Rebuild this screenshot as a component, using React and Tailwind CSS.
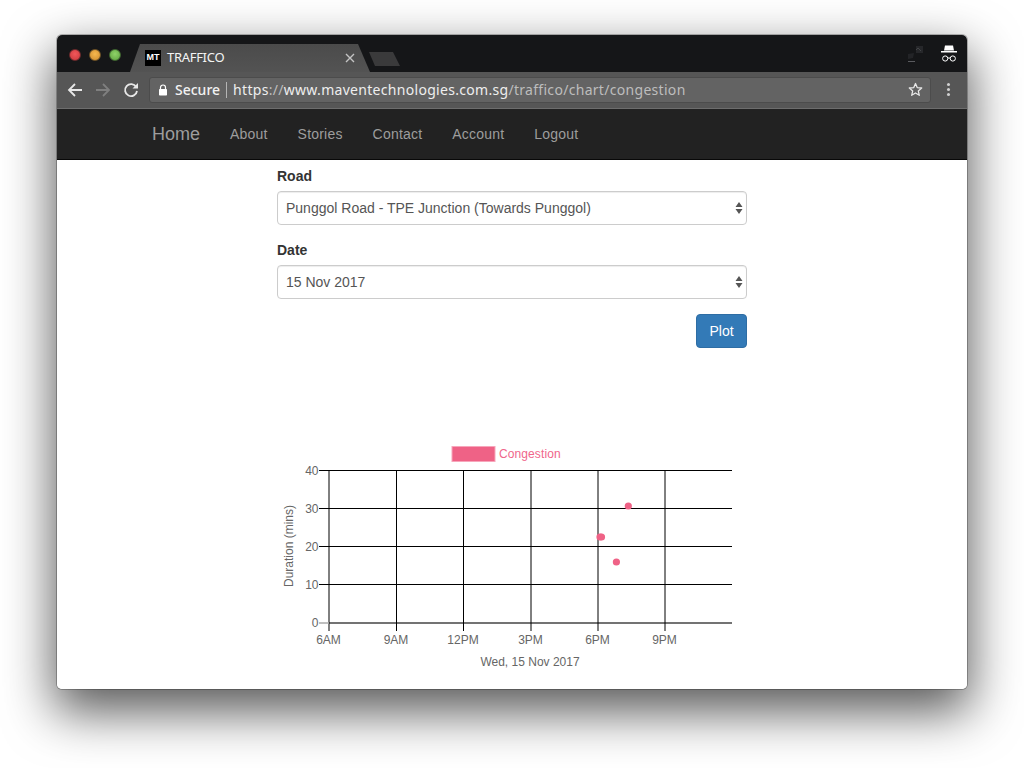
import React from "react";

const FONT_UI = "font-['Noto_Sans',sans-serif]";
const FONT_PAGE = "font-['Liberation_Sans',Arial,sans-serif]";

const navLinks = ["About", "Stories", "Contact", "Account", "Logout"];

function SelectField({ label, value }) {
  return (
    <div className="mb-[15px]">
      <label className="block mb-[5px] text-[14px] leading-[20px] font-bold text-[#333]">{label}</label>
      <div className="relative">
        <select
          defaultValue={value}
          className="block w-full h-[34px] pl-[8px] pr-[24px] appearance-none bg-white border border-[#ccc] rounded-[4px] text-[14px] text-[#555] shadow-[inset_0_1px_1px_rgba(0,0,0,0.075)]"
        >
          <option>{value}</option>
        </select>
        <svg className="absolute right-[4px] top-[10px] pointer-events-none" width="8" height="14" viewBox="0 0 8 14">
          <path d="M4 1 L7.5 6 H0.5 Z M4 13 L7.5 8 H0.5 Z" fill="#555" />
        </svg>
      </div>
    </div>
  );
}

function CongestionChart() {
  const xs = [329, 396.5, 463.5, 531, 598, 665];
  const ys = [470.5, 508.5, 546.5, 584.5];
  const xLabels = ["6AM", "9AM", "12PM", "3PM", "6PM", "9PM"];
  const yLabels = ["40", "30", "20", "10"];
  return (
    <svg width="470" height="240" viewBox="277 440 470 240" className="block" fontFamily="Liberation Sans, Arial, sans-serif">
      <rect x="452" y="446.5" width="43" height="15" fill="#ef6286" stroke="#f7a6bb" strokeWidth="1" />
      <text x="499" y="458" fontSize="12" letterSpacing="0.1" fill="#f0668b">Congestion</text>

      {xs.map((x, i) => (
        <g key={x}>
          <line x1={x} x2={x} y1="470" y2="631" stroke="#000" strokeWidth="1" />
          <text x={x - 0.5} y="644" fontSize="12" fill="#666" textAnchor="middle">{xLabels[i]}</text>
        </g>
      ))}
      {ys.map((y, i) => (
        <g key={y}>
          <line x1="319" x2="732" y1={y} y2={y} stroke="#000" strokeWidth="1" />
          <text x="318.5" y={y + 4} fontSize="12" fill="#666" textAnchor="end">{yLabels[i]}</text>
        </g>
      ))}
      <line x1="319" x2="329" y1="623" y2="623" stroke="#aaa" strokeWidth="1.5" />
      <line x1="329" x2="732" y1="623" y2="623" stroke="#000" strokeOpacity="0.55" strokeWidth="2" />
      <text x="318.5" y="627" fontSize="12" fill="#666" textAnchor="end">0</text>

      <text transform="translate(292.5 546) rotate(-90)" fontSize="12" fill="#666" textAnchor="middle">Duration (mins)</text>
      <text x="530" y="666" fontSize="12" fill="#666" textAnchor="middle">Wed, 15 Nov 2017</text>

      <circle cx="628.3" cy="506" r="3.6" fill="#ef6286" />
      <circle cx="600" cy="537" r="3.6" fill="#ef6286" />
      <circle cx="601.5" cy="537" r="3.6" fill="#ef6286" />
      <circle cx="616.4" cy="562" r="3.6" fill="#ef6286" />
    </svg>
  );
}

export default function App() {
  return (
    <div className="w-[1024px] h-[768px] overflow-hidden bg-white pt-[35px] pl-[57px]">
      <div className="w-[910px] h-[654px] rounded-[5px] shadow-[0_0_0_1px_rgba(0,0,0,0.25),0_20px_50px_3px_rgba(0,0,0,0.65)]">
        <div className="w-full h-full rounded-[5px] overflow-hidden flex flex-col bg-white">
          {/* title bar */}
          <div className="h-[37px] shrink-0 bg-[#151618] flex items-end">
            <div className="flex gap-[8px] ml-[12px] mb-[11px]">
              <span className="w-[12px] h-[12px] rounded-full border border-[#6b2a2c] bg-[radial-gradient(circle_at_50%_40%,#f0575a,#c9383c)]" />
              <span className="w-[12px] h-[12px] rounded-full border border-[#6e5226] bg-[radial-gradient(circle_at_50%_40%,#f7b84e,#cc8a2e)]" />
              <span className="w-[12px] h-[12px] rounded-full border border-[#3f6530] bg-[radial-gradient(circle_at_50%_40%,#8fd268,#5ea23f)]" />
            </div>
            <div className="ml-[9px] w-[240px] h-[28px] flex items-center pl-[15px] pr-[15px] bg-[linear-gradient(#4b4b4b,#535353)] [clip-path:polygon(0_100%,10px_0,228px_0,100%_100%)]">
              <span className="w-[16px] h-[16px] bg-black flex items-center justify-center text-white text-[9px] font-bold font-['Liberation_Sans',sans-serif]">MT</span>
              <span className={`ml-[6px] text-[13px] tracking-[-0.3px] text-[#f4f4f4] ${FONT_UI}`}>TRAFFICO</span>
              <svg className="ml-auto" width="10" height="10" viewBox="0 0 10 10">
                <path d="M1 1 L9 9 M9 1 L1 9" stroke="#c4c4c4" strokeWidth="1.4" />
              </svg>
            </div>
            <svg className="-ml-[1px] mb-[6px]" width="32" height="14" viewBox="0 0 32 14">
              <path d="M0 0 H24 L31 14 H6 Z" fill="#3a3a3b" />
            </svg>
            <div className="ml-auto flex items-center gap-[18px] mr-[10px] self-center">
              <svg width="15" height="16" viewBox="0 0 15 16" fill="none">
                <rect x="8" y="0" width="7" height="7" fill="#26272a" />
                <path d="M0 15.5 H7" stroke="#5a5b5f" strokeWidth="1" />
                <path d="M0 13 L0 8 L6 7 L5 12 Z" fill="#232427" />
                <path d="M8 4 L10 2 L13 5" stroke="#4a4b4e" strokeWidth="0.8" />
              </svg>
              <svg width="16" height="18" viewBox="0 0 16 18" fill="none">
                <path d="M4 0.5 H12 L13 5.5 H3 Z" fill="#fff" />
                <path d="M0 6.8 H16" stroke="#fff" strokeWidth="1.5" />
                <circle cx="4.2" cy="13.5" r="2.6" stroke="#fff" strokeWidth="1" />
                <circle cx="11.8" cy="13.5" r="2.6" stroke="#fff" strokeWidth="1" />
                <path d="M6.8 13 H9.2" stroke="#fff" strokeWidth="1" />
              </svg>
            </div>
          </div>

          {/* toolbar */}
          <div className="h-[37px] shrink-0 bg-[#565656] border-b border-[#6d6d6d] flex items-center pb-[1px]">
            <svg className="ml-[10px]" width="16" height="16" viewBox="0 0 16 16" fill="none">
              <path d="M15 8 H2 M8 2 L2 8 L8 14" stroke="#e8e8e8" strokeWidth="1.8" />
            </svg>
            <svg className="ml-[12px]" width="16" height="16" viewBox="0 0 16 16" fill="none">
              <path d="M1 8 H14 M8 2 L14 8 L8 14" stroke="#7f7f7f" strokeWidth="1.8" />
            </svg>
            <svg className="ml-[12px]" width="16" height="16" viewBox="0 0 16 16" fill="none">
              <path d="M13.2 5 A6 6 0 1 0 14 9" stroke="#e8e8e8" strokeWidth="1.8" />
              <path d="M15 1 V6.5 H9.5 Z" fill="#e8e8e8" />
            </svg>
            <div className="ml-[10px] w-[782px] h-[26px] bg-[#636363] border border-[#4c4c4c] rounded-[3px] flex items-center pl-[8px] pr-[7px]">
              <svg width="10" height="12" viewBox="0 0 10 12" fill="none">
                <path d="M2.5 5.5 V3.5 A2.5 2.5 0 0 1 7.5 3.5 V5.5" stroke="#fff" strokeWidth="1.2" />
                <rect x="1" y="5" width="8" height="6.5" rx="0.8" fill="#fff" />
              </svg>
              <span className={`ml-[7px] text-[14px] font-medium text-[#f2f2f2] ${FONT_UI}`}>Secure</span>
              <span className="ml-[6px] mr-[6px] w-[1px] h-[16px] bg-[#b5b5b5]" />
              <span className={`text-[14px] text-[#bdbdbd] tracking-[0.3px] whitespace-nowrap ${FONT_UI}`}>
                <span className="text-[#eee]">https</span>://<span className="text-[#eee]">www.maventechnologies.com.sg</span>/traffico/chart/congestion
              </span>
              <svg className="ml-auto" width="15" height="15" viewBox="0 0 15 15" fill="none">
                <path d="M7.5 1.5 L9.2 5.6 L13.7 6 L10.3 8.9 L11.3 13.3 L7.5 11 L3.7 13.3 L4.7 8.9 L1.3 6 L5.8 5.6 Z" stroke="#e8e8e8" strokeWidth="1.3" strokeLinejoin="round" />
              </svg>
            </div>
            <div className="ml-[16px] flex flex-col gap-[2px]">
              <span className="w-[3px] h-[3px] rounded-full bg-[#d0d0d0]" />
              <span className="w-[3px] h-[3px] rounded-full bg-[#d0d0d0]" />
              <span className="w-[3px] h-[3px] rounded-full bg-[#d0d0d0]" />
            </div>
          </div>

          {/* navbar */}
          <div className={`h-[51px] shrink-0 bg-[#222] border-b border-[#080808] flex items-center pl-[95px] text-[#9d9d9d] ${FONT_PAGE}`}>
            <span className="text-[18px] mr-[30px]">Home</span>
            <div className="flex gap-[30px] text-[14px] tracking-[0.2px]">
              {navLinks.map((link) => (
                <span key={link}>{link}</span>
              ))}
            </div>
          </div>

          {/* page */}
          <div className={`flex-1 w-[470px] ml-[220px] pt-[6px] ${FONT_PAGE}`}>
            <SelectField label="Road" value="Punggol Road - TPE Junction (Towards Punggol)" />
            <SelectField label="Date" value="15 Nov 2017" />
            <div className="flex justify-end">
              <button className="w-[51px] h-[34px] bg-[#337ab7] border border-[#2e6da4] rounded-[4px] text-white text-[14px] font-medium">Plot</button>
            </div>
            <div className="mt-[92px]">
              <CongestionChart />
            </div>
          </div>
        </div>
      </div>
    </div>
  );
}
